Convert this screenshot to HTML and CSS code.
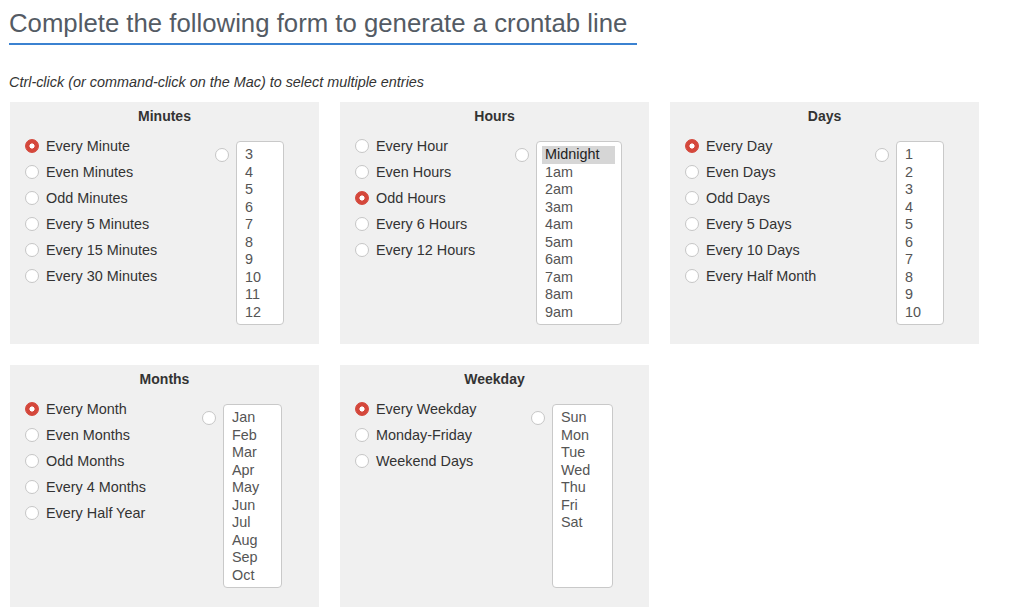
FILE: index.html
```html
<!DOCTYPE html>
<html lang="en">
<head>
    <meta charset="UTF-8">
    <meta name="viewport" content="width=device-width, initial-scale=1.0">
    <title>Crontab Generator</title>
    <link rel="stylesheet" href="styles.css">
</head>
<body>

<div class="page">
    <h1>Complete the following form to generate a crontab line</h1>
    <p class="hint">Ctrl-click (or command-click on the Mac) to select multiple entries</p>

    <form class="panels">
        <!-- Minutes -->
        <div class="panel panel-minutes">
            <h3>Minutes</h3>
            <div class="panel-body">
                <div class="options">
                    <label><input type="radio" name="mins" checked> Every Minute</label>
                    <label><input type="radio" name="mins"> Even Minutes</label>
                    <label><input type="radio" name="mins"> Odd Minutes</label>
                    <label><input type="radio" name="mins"> Every 5 Minutes</label>
                    <label><input type="radio" name="mins"> Every 15 Minutes</label>
                    <label><input type="radio" name="mins"> Every 30 Minutes</label>
                </div>
                <div class="picker">
                    <input type="radio" name="mins">
                    <div class="listbox">
                        <div>3</div><div>4</div><div>5</div><div>6</div><div>7</div>
                        <div>8</div><div>9</div><div>10</div><div>11</div><div>12</div>
                    </div>
                </div>
            </div>
        </div>

        <!-- Hours -->
        <div class="panel panel-hours">
            <h3>Hours</h3>
            <div class="panel-body">
                <div class="options">
                    <label><input type="radio" name="hours"> Every Hour</label>
                    <label><input type="radio" name="hours"> Even Hours</label>
                    <label><input type="radio" name="hours" checked> Odd Hours</label>
                    <label><input type="radio" name="hours"> Every 6 Hours</label>
                    <label><input type="radio" name="hours"> Every 12 Hours</label>
                </div>
                <div class="picker">
                    <input type="radio" name="hours">
                    <div class="listbox">
                        <div class="selected">Midnight</div>
                        <div>1am</div><div>2am</div><div>3am</div><div>4am</div>
                        <div>5am</div><div>6am</div><div>7am</div><div>8am</div><div>9am</div>
                    </div>
                </div>
            </div>
        </div>

        <!-- Days -->
        <div class="panel panel-days">
            <h3>Days</h3>
            <div class="panel-body">
                <div class="options">
                    <label><input type="radio" name="days" checked> Every Day</label>
                    <label><input type="radio" name="days"> Even Days</label>
                    <label><input type="radio" name="days"> Odd Days</label>
                    <label><input type="radio" name="days"> Every 5 Days</label>
                    <label><input type="radio" name="days"> Every 10 Days</label>
                    <label><input type="radio" name="days"> Every Half Month</label>
                </div>
                <div class="picker">
                    <input type="radio" name="days">
                    <div class="listbox">
                        <div>1</div><div>2</div><div>3</div><div>4</div><div>5</div>
                        <div>6</div><div>7</div><div>8</div><div>9</div><div>10</div>
                    </div>
                </div>
            </div>
        </div>

        <!-- Months -->
        <div class="panel panel-months">
            <h3>Months</h3>
            <div class="panel-body">
                <div class="options">
                    <label><input type="radio" name="months" checked> Every Month</label>
                    <label><input type="radio" name="months"> Even Months</label>
                    <label><input type="radio" name="months"> Odd Months</label>
                    <label><input type="radio" name="months"> Every 4 Months</label>
                    <label><input type="radio" name="months"> Every Half Year</label>
                </div>
                <div class="picker">
                    <input type="radio" name="months">
                    <div class="listbox">
                        <div>Jan</div><div>Feb</div><div>Mar</div><div>Apr</div><div>May</div>
                        <div>Jun</div><div>Jul</div><div>Aug</div><div>Sep</div><div>Oct</div>
                    </div>
                </div>
            </div>
        </div>

        <!-- Weekday -->
        <div class="panel panel-weekday">
            <h3>Weekday</h3>
            <div class="panel-body">
                <div class="options">
                    <label><input type="radio" name="weekday" checked> Every Weekday</label>
                    <label><input type="radio" name="weekday"> Monday-Friday</label>
                    <label><input type="radio" name="weekday"> Weekend Days</label>
                </div>
                <div class="picker">
                    <input type="radio" name="weekday">
                    <div class="listbox">
                        <div>Sun</div><div>Mon</div><div>Tue</div><div>Wed</div>
                        <div>Thu</div><div>Fri</div><div>Sat</div>
                    </div>
                </div>
            </div>
        </div>
    </form>
</div>

</body>
</html>
```

FILE: styles.css
```css
body {
    margin: 0;
    font-family: "Liberation Sans", Arial, Helvetica, sans-serif;
    color: #333;
    background: #fff;
}
.page {
    padding: 0 10px;
}
h1 {
    display: inline-block;
    margin: 8px 0 0 -1px;
    padding: 0 10px 5px 0;
    font-size: 25.75px;
    line-height: 30px;
    font-weight: normal;
    color: #545b64;
    border-bottom: 2px solid #3b82d1;
}
.hint {
    margin: 29px 0 11px -1px;
    font-size: 14.4px;
    line-height: 17px;
    font-style: italic;
    color: #333;
}
.panels {
    display: grid;
    grid-template-columns: repeat(3, 309px);
    gap: 21px;
}
.panel {
    background: #f0f0f0;
    padding: 6px 15px 19px;
}
.panel h3 {
    margin: 0;
    font-size: 14px;
    line-height: 17px;
    text-align: center;
    color: #333;
}
.panel-body {
    display: grid;
    grid-template-columns: 190px auto;
    margin-top: 8px;
}
.panel-hours .panel-body {
    grid-template-columns: 160px auto;
}
.panel-months .panel-body {
    grid-template-columns: 177px auto;
}
.panel-weekday .panel-body {
    grid-template-columns: 176px auto;
}
.options label {
    display: flex;
    align-items: center;
    gap: 7px;
    height: 26px;
    font-size: 14.4px;
    color: #333;
}
input[type="radio"] {
    appearance: none;
    -webkit-appearance: none;
    flex: none;
    width: 14px;
    height: 14px;
    margin: 0;
    border: 1px solid #c6c6c6;
    border-radius: 50%;
    background: #fff;
    box-sizing: border-box;
}
input[type="radio"]:checked {
    border-color: #d4473b;
    background: radial-gradient(circle, #fff 0 2.3px, #d4473b 2.8px);
}
.picker {
    display: flex;
    align-items: flex-start;
    gap: 7px;
    margin-top: 8px;
}
.picker input[type="radio"] {
    margin-top: 7px;
}
.listbox {
    height: 175px;
    padding: 4px 6px 3px 5px;
    background: #fff;
    border: 1px solid #c9c9c9;
    border-radius: 4px;
    overflow: hidden;
    font-size: 14.4px;
    line-height: 17.5px;
    color: #555;
}
.listbox div {
    padding: 0 16px 0 3px;
    white-space: nowrap;
}
.listbox .selected {
    background: #d6d6d6;
    color: #222;
}
```
